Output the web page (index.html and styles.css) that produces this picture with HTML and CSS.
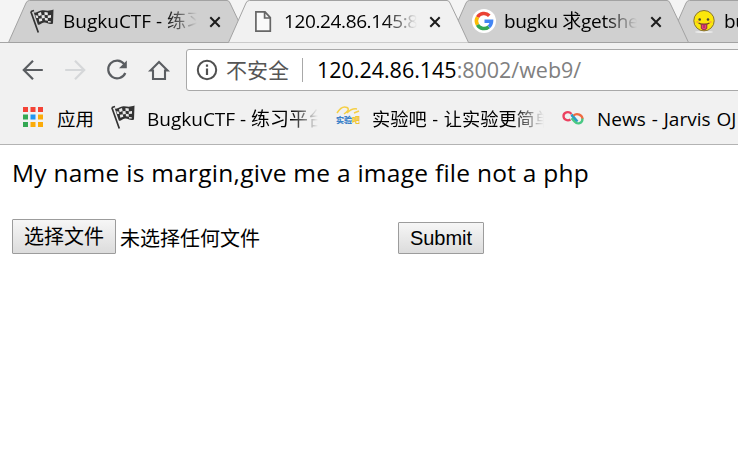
FILE: index.html
```html
<!DOCTYPE html>
<html lang="zh-CN">
<head>
<meta charset="utf-8">
<title>120.24.86.145:8002/web9/</title>
<link rel="stylesheet" href="styles.css">
</head>
<body>
<svg class="defs" width="0" height="0" aria-hidden="true">
  <symbol id="shape" viewBox="0 0 241 43"><path d="M.5 42.500 18 3Q19 .5 21.500 .5H219Q221 .5 222 3L231 22 240.500 42.500"/></symbol>
  <symbol id="shape-closed" viewBox="0 0 241 43"><path d="M.5 42.500 18 3Q19 .5 21.500 .5H219Q221 .5 222 3L231 22 240.500 42.500Z"/></symbol>
  <symbol id="close" viewBox="0 0 12 12"><path d="M1.300 1.300l9.400 9.400M10.700 1.300l-9.400 9.400" fill="none" stroke="#1c1c1c" stroke-width="2"/></symbol>
  <symbol id="flag" viewBox="0 0 24 24">
    <path d="M.8 2.500 8.300 23.500M1 2.500l3-1" fill="none" stroke="#333" stroke-width="1.700"/>
    <path d="M3.800 3.600C7 4.500 9 .8 13 1.300S20 2 23.500.6L23 14.500C19 16.300 17 13 14 13.500S10 16.500 7.800 15.500Z" fill="#333"/>
    <path d="M8 4.200l3-1.200.6 3-3 1.200zM14.500 3l3.300.5v2.800l-3.300-.5zM11.500 6.300l3-.4.3 3-3 .6zM17.800 6.400l3.200-.4v2.700l-3.200.4zM8.800 9.800l3-.6.5 2.500-3 1zM14.800 8.800l3 .4v2.600l-2.900-.5zM18 12l2.800.3v1.300l-2.800-.2zM5.300 6.300l2.300.3.7 2.500-2-.2z" fill="#e8e8e8"/>
  </symbol>
</svg>
<header class="browser">
  <nav class="tabs">
    <div class="tab first">
      <svg class="tab-bg"><use href="#shape-closed"/></svg>
      <svg class="favicon"><use href="#flag"/></svg>
      <span class="tab-title bugku">BugkuCTF - 练习</span>
      <svg class="close"><use href="#close"/></svg>
    </div>
    <div class="tab active">
      <svg class="tab-bg"><use href="#shape"/></svg>
      <svg class="favicon" viewBox="0 0 24 24"><path d="M5.900 2.900H15L20.300 8.600V22.200H5.900ZM14.600 3V9H20" fill="#fafafa" stroke="#666" stroke-width="1.700"/></svg>
      <span class="tab-title address">120.24.86.145:8</span>
      <svg class="close"><use href="#close"/></svg>
    </div>
    <div class="tab third">
      <svg class="tab-bg"><use href="#shape-closed"/></svg>
      <svg class="favicon" viewBox="0 0 24 24"><circle cx="12" cy="12" r="12" fill="#fff"/><g fill="none" stroke-width="3.600"><path d="M17.300 6.700A7.500 7.500 0 0 0 5.500 8.200" stroke="#ea4335"/><path d="M5.500 8.200A7.500 7.500 0 0 0 5.500 15.800" stroke="#fbbc05"/><path d="M5.500 15.800A7.500 7.500 0 0 0 16.800 17.800" stroke="#34a853"/><path d="M16.800 17.800A7.500 7.500 0 0 0 19.500 12.200H12.500" stroke="#4285f4"/></g></svg>
      <span class="tab-title search">bugku 求getshe</span>
      <svg class="close"><use href="#close"/></svg>
    </div>
    <div class="tab fourth">
      <svg class="tab-bg"><use href="#shape-closed"/></svg>
      <svg class="favicon" viewBox="0 0 24 24"><ellipse cx="12" cy="23" rx="9" ry="1" fill="#eee"/><circle cx="12" cy="11.700" r="10.200" fill="#fbe70b" stroke="#87742d"/><circle cx="7.700" cy="10.500" r="1.300" fill="#443"/><circle cx="16" cy="10.500" r="1.300" fill="#443"/><path d="M6.500 14Q12 17 17.500 14" fill="none" stroke="#6b4a22" stroke-width="1.300"/><path d="M9.300 15.200h5.500v4.300q-2.700 3-5.500 0z" fill="#ec407a" stroke="#8b3045"/><path d="M12 16v3" stroke="#8b3045"/><path d="M4.500 13h2M17.500 13h2" stroke="#ff9a3c" stroke-width="1.500"/></svg>
      <span class="tab-title search">bu</span>
    </div>
  </nav>
  <div class="toolbar">
    <svg class="tool" viewBox="0 0 24 24"><path d="M21.800 12H3M12 2.800 2.800 12l9.200 9.200" fill="none" stroke="#5a5d61" stroke-width="2.200"/></svg>
    <svg class="tool" viewBox="0 0 24 24"><path d="M2.200 12H21M12 2.800l9.200 9.200-9.200 9.200" fill="none" stroke="#d5d7d9" stroke-width="2.200"/></svg>
    <svg class="tool" viewBox="0 0 24 24"><path d="M19.300 6.200A8.900 8.900 0 1 0 20.300 15" fill="none" stroke="#5a5d61" stroke-width="2.200"/><path d="M21.800 2.500v7.800h-7.800z" fill="#5a5d61"/></svg>
    <svg class="tool" viewBox="0 0 24 24"><path d="M3.500 12.500 12 4 20.500 12.500H18V21H6V12.500Z" fill="none" stroke="#5a5d61" stroke-width="2.100"/></svg>
    <div class="omnibox">
      <svg class="info" viewBox="0 0 22 22"><circle cx="11" cy="11" r="9.200" fill="none" stroke="#505050" stroke-width="2"/><path d="M11 9.500V16M11 5.500V7.800" stroke="#505050" stroke-width="2.200"/></svg>
      <span class="security">不安全</span>
      <span class="divider"></span>
      <span class="url"><span class="host">120.24.86.145</span>:8002/web9/</span>
    </div>
  </div>
  <nav class="bookmarks">
    <svg class="apps" viewBox="0 0 20 20"><path d="M0 0h5v5H0zM7.500 0h5v5h-5zM15 0h5v5h-5z" fill="#f44336"/><path d="M0 7.500h5v5H0zM0 15h5v5H0z" fill="#34a853"/><path d="M7.500 7.500h5v5h-5z" fill="#2196f3"/><path d="M15 7.500h5v5h-5zM7.500 15h5v5h-5zM15 15h5v5h-5z" fill="#fbab09"/></svg>
    <span class="bookmark apps-label">应用</span>
    <svg class="mark"><use href="#flag"/></svg>
    <span class="bookmark bugku-link">BugkuCTF - 练习平台</span>
    <span class="lab-logo"><svg viewBox="0 0 24 9"><path d="M1 7Q6-1 11 1.500C14 3 11 6 8 8M11 7Q16 2 21 3M18 7L23 5" fill="none" stroke="#f5cf45" stroke-width="1.500"/></svg><span><b>实验</b><i>吧</i></span></span>
    <span class="bookmark lab-link">实验吧 - 让实验更简单</span>
    <svg class="jarvis" viewBox="0 0 22 16" fill="none" stroke-width="2.300"><path d="M14.500 11L9.500 5" stroke="#2a9cc5"/><path d="M8.500 9.500C5.500 11.500 1.500 9.500 1.500 6C1.500 2.500 6.500 .5 9.500 4" stroke="#ec4160"/><path d="M9.500 4.500L15.500 11.500" stroke="#2a9cc5"/><path d="M11.500 5.500C15 2.500 20.500 5 20.500 9" stroke="#f06b40"/><path d="M20.500 8.500C20.500 13.500 15.500 15 12.500 11.500L9.500 8.300" stroke="#49c883"/></svg>
    <span class="bookmark news-link">News - Jarvis OJ</span>
  </nav>
</header>
<main>
  <p class="message">My name is margin,give me a image file not a php</p>
  <form class="upload" onsubmit="return false">
    <button class="choose" type="button">选择文件</button>
    <span class="filename">未选择任何文件</span>
    <button class="submit" type="submit">Submit</button>
  </form>
</main>
</body>
</html>
```
FILE: styles.css
```css
* { box-sizing: border-box; }
body {
  margin: 0;
  height: 457px;
  overflow: hidden;
  background: #fff;
  color: #000;
  font: 19px/26px "Open Sans", "Noto Sans CJK SC", sans-serif;
}
svg { display: block; flex: none; }
.defs { position: absolute; }
.browser { height: 145px; background: #f1f1f1; border-bottom: 1px solid #b3b3b3; overflow: hidden; }
.tabs { display: flex; height: 43px; padding-left: 8px; background: #f4f4f4; box-shadow: inset 0 -1px #a5a5a5; }
.tab {
  position: relative;
  display: flex;
  flex: none;
  align-items: flex-start;
  width: 241px;
  height: 43px;
  margin-right: -21px;
  padding: 9px 0 0 22px;
}
.active { z-index: 3; }
.third { z-index: 2; }
.fourth { z-index: 1; }
.tab-bg { position: absolute; inset: 0; width: 241px; height: 43px; fill: #d0d0d0; stroke: #a2a2a2; }
.active .tab-bg { fill: #f1f1f1; }
.favicon { position: relative; width: 24px; height: 24px; }
.third .favicon, .fourth .favicon { margin-left: 2px; margin-right: -2px; }
.tab-title {
  position: relative;
  width: 134px;
  margin: -1px 0 0 9px;
  overflow: hidden;
  white-space: nowrap;
  mask-image: linear-gradient(90deg, #000 76%, transparent);
}
.close { position: relative; width: 12px; height: 12px; margin: 7px 0 0 12px; }
.third .close { margin-left: 13px; }
.address { padding-left: 1px; letter-spacing: -.38px; }
.search { padding-left: 1px; letter-spacing: -.3px; }
.toolbar { display: flex; gap: 18px; height: 52px; padding: 6px 0 0 21px; }
.tool { width: 24px; height: 24px; margin-top: 9px; }
.omnibox {
  display: flex;
  flex: none;
  align-items: center;
  width: 600px;
  height: 42px;
  margin-left: -3px;
  padding-left: 9px;
  background: #fff;
  border: 1px solid #a9a9a9;
  border-radius: 3px;
}
.info { width: 22px; height: 22px; }
.security { width: 64px; margin-left: 8px; color: #555; font-size: 21px; }
.divider { width: 1px; height: 24px; margin-left: 12px; background: #a8a8a8; }
.url { margin-left: 14px; color: #808080; font-size: 21.500px; letter-spacing: -.02px; white-space: nowrap; }
.host { color: #000; }
.bookmarks { display: flex; height: 49px; padding: 9px 0 0 23px; }
.bookmark { flex: none; margin-top: 2px; overflow: hidden; white-space: nowrap; }
.apps { width: 20px; height: 20px; margin-top: 3px; }
.apps-label { width: 38px; margin-left: 14px; font-size: 18.500px; }
.mark { width: 24px; height: 24px; margin: 1px 12px 0 16px; }
.bugku-link { width: 171px; mask-image: linear-gradient(90deg, #000 84%, transparent); }
.lab-logo { flex: none; width: 24px; margin: 2px 12px 0 18px; font-size: 8px; line-height: 10px; white-space: nowrap; }
.lab-logo svg { width: 24px; height: 9px; }
.lab-logo b { color: #3d82c9; font-weight: 900; }
.lab-logo i { color: #f2c52e; font-style: normal; font-weight: 900; }
.lab-link { width: 172px; font-size: 18.200px; word-spacing: 1px; mask-image: linear-gradient(90deg, #000 82%, transparent); }
.jarvis { width: 22px; height: 16px; margin: 6px 13px 0 18px; }
.news-link { width: 143px; word-spacing: 1px; }
main { padding: 11px 12px 0; }
.message { margin: 0; font-size: 24.500px; line-height: 34px; letter-spacing: .26px; white-space: nowrap; }
.upload { display: flex; align-items: flex-end; height: 35px; margin-top: 29px; }
button {
  padding: 0;
  border: 1px solid #9c9c9c;
  border-radius: 1px;
  background: linear-gradient(#f6f6f6, #dcdcdc);
  color: #000;
  font: 20px/30px "Liberation Sans", "Noto Sans CJK SC", sans-serif;
}
.choose { width: 104px; height: 35px; line-height: 35px; }
.filename { width: 282px; padding-left: 4px; font-size: 20px; line-height: 31px; }
.submit { width: 86px; height: 32px; }
```
